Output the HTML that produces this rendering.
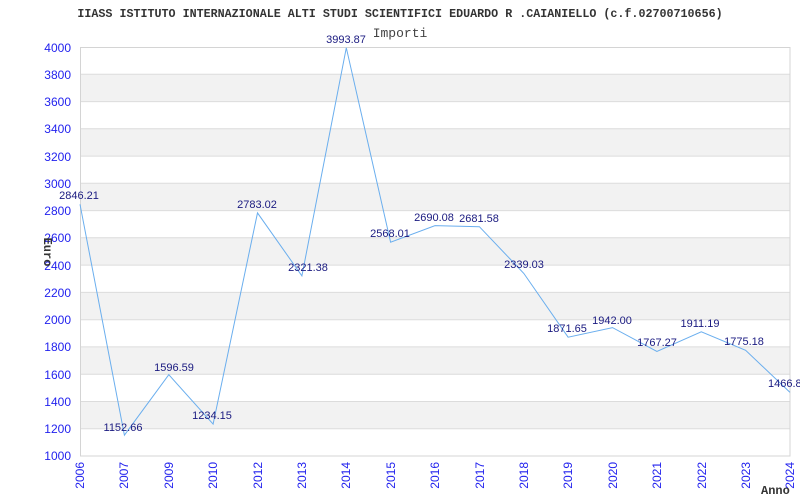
<!DOCTYPE html>
<html><head><meta charset="utf-8"><style>
html,body{margin:0;padding:0;background:#fff;width:800px;height:500px;overflow:hidden}
</style></head><body>
<svg width="800" height="500" xmlns="http://www.w3.org/2000/svg" style="display:block">
<rect width="800" height="500" fill="#fff"/>
<g fill="#f2f2f2">
<rect x="80" y="74.3" width="710" height="27.3"/>
<rect x="80" y="128.8" width="710" height="27.3"/>
<rect x="80" y="183.3" width="710" height="27.3"/>
<rect x="80" y="237.8" width="710" height="27.3"/>
<rect x="80" y="292.4" width="710" height="27.3"/>
<rect x="80" y="346.9" width="710" height="27.3"/>
<rect x="80" y="401.5" width="710" height="27.3"/>
</g>
<g stroke="#dcdcdc" stroke-width="1">
<line x1="80" y1="74.3" x2="790" y2="74.3"/><line x1="80" y1="101.6" x2="790" y2="101.6"/>
<line x1="80" y1="128.8" x2="790" y2="128.8"/><line x1="80" y1="156.1" x2="790" y2="156.1"/>
<line x1="80" y1="183.3" x2="790" y2="183.3"/><line x1="80" y1="210.6" x2="790" y2="210.6"/>
<line x1="80" y1="237.8" x2="790" y2="237.8"/><line x1="80" y1="265.1" x2="790" y2="265.1"/>
<line x1="80" y1="292.4" x2="790" y2="292.4"/><line x1="80" y1="319.7" x2="790" y2="319.7"/>
<line x1="80" y1="346.9" x2="790" y2="346.9"/><line x1="80" y1="374.2" x2="790" y2="374.2"/>
<line x1="80" y1="401.5" x2="790" y2="401.5"/><line x1="80" y1="428.8" x2="790" y2="428.8"/>
</g>
<rect x="80.5" y="47.5" width="709.5" height="408.5" fill="none" stroke="#d4d4d4"/>
<text x="400" y="17" text-anchor="middle" font-family="Liberation Mono, monospace" font-weight="bold" font-size="11.7" fill="#333">IIASS ISTITUTO INTERNAZIONALE ALTI STUDI SCIENTIFICI EDUARDO R .CAIANIELLO (c.f.02700710656)</text>
<text x="400" y="37" text-anchor="middle" font-family="Liberation Mono, monospace" font-size="13" fill="#444">Importi</text>
<g font-family="Liberation Sans, sans-serif" font-size="12" fill="#2222ee" text-anchor="end">
<text x="71" y="52">4000</text><text x="71" y="79">3800</text><text x="71" y="106">3600</text>
<text x="71" y="133">3400</text><text x="71" y="161">3200</text><text x="71" y="188">3000</text>
<text x="71" y="215">2800</text><text x="71" y="242">2600</text><text x="71" y="270">2400</text>
<text x="71" y="297">2200</text><text x="71" y="324">2000</text><text x="71" y="351">1800</text>
<text x="71" y="379">1600</text><text x="71" y="406">1400</text><text x="71" y="433">1200</text>
<text x="71" y="460">1000</text>
</g>
<text transform="translate(44,252) rotate(90)" text-anchor="middle" font-family="Liberation Mono, monospace" font-weight="bold" font-size="12" fill="#333">Euro</text>
<text x="761" y="494" font-family="Liberation Mono, monospace" font-weight="bold" font-size="12" fill="#333">Anno</text>
<g font-family="Liberation Sans, sans-serif" font-size="12" fill="#2222ee" text-anchor="end">
<text transform="translate(84,462) rotate(-90)">2006</text>
<text transform="translate(128,462) rotate(-90)">2007</text>
<text transform="translate(173,462) rotate(-90)">2009</text>
<text transform="translate(217,462) rotate(-90)">2010</text>
<text transform="translate(262,462) rotate(-90)">2012</text>
<text transform="translate(306,462) rotate(-90)">2013</text>
<text transform="translate(350,462) rotate(-90)">2014</text>
<text transform="translate(395,462) rotate(-90)">2015</text>
<text transform="translate(439,462) rotate(-90)">2016</text>
<text transform="translate(484,462) rotate(-90)">2017</text>
<text transform="translate(528,462) rotate(-90)">2018</text>
<text transform="translate(572,462) rotate(-90)">2019</text>
<text transform="translate(617,462) rotate(-90)">2020</text>
<text transform="translate(661,462) rotate(-90)">2021</text>
<text transform="translate(706,462) rotate(-90)">2022</text>
<text transform="translate(750,462) rotate(-90)">2023</text>
<text transform="translate(794,462) rotate(-90)">2024</text>
</g>
<polyline fill="none" stroke="#6aaeee" stroke-width="1" points="80,204.3 124.4,435.2 168.8,374.7 213.1,424.1 257.5,212.9 301.9,275.9 346.3,47.8 390.6,242.2 435,225.6 479.4,226.7 523.8,273.4 568.1,337.2 612.5,327.6 656.9,351.4 701.3,331.8 745.6,350.3 790,392.4"/>
<g font-family="Liberation Sans, sans-serif" font-size="11" fill="#1a1a80" text-anchor="middle">
<text x="79" y="199">2846.21</text>
<text x="123" y="431">1152.66</text>
<text x="174" y="371">1596.59</text>
<text x="212" y="419">1234.15</text>
<text x="257" y="208">2783.02</text>
<text x="308" y="271">2321.38</text>
<text x="346" y="43">3993.87</text>
<text x="390" y="237">2568.01</text>
<text x="434" y="221">2690.08</text>
<text x="479" y="222">2681.58</text>
<text x="524" y="268">2339.03</text>
<text x="567" y="332">1871.65</text>
<text x="612" y="324">1942.00</text>
<text x="657" y="346">1767.27</text>
<text x="700" y="327">1911.19</text>
<text x="744" y="345">1775.18</text>
<text x="768" y="387" text-anchor="start">1466.8</text>
</g>
</svg>
</body></html>
